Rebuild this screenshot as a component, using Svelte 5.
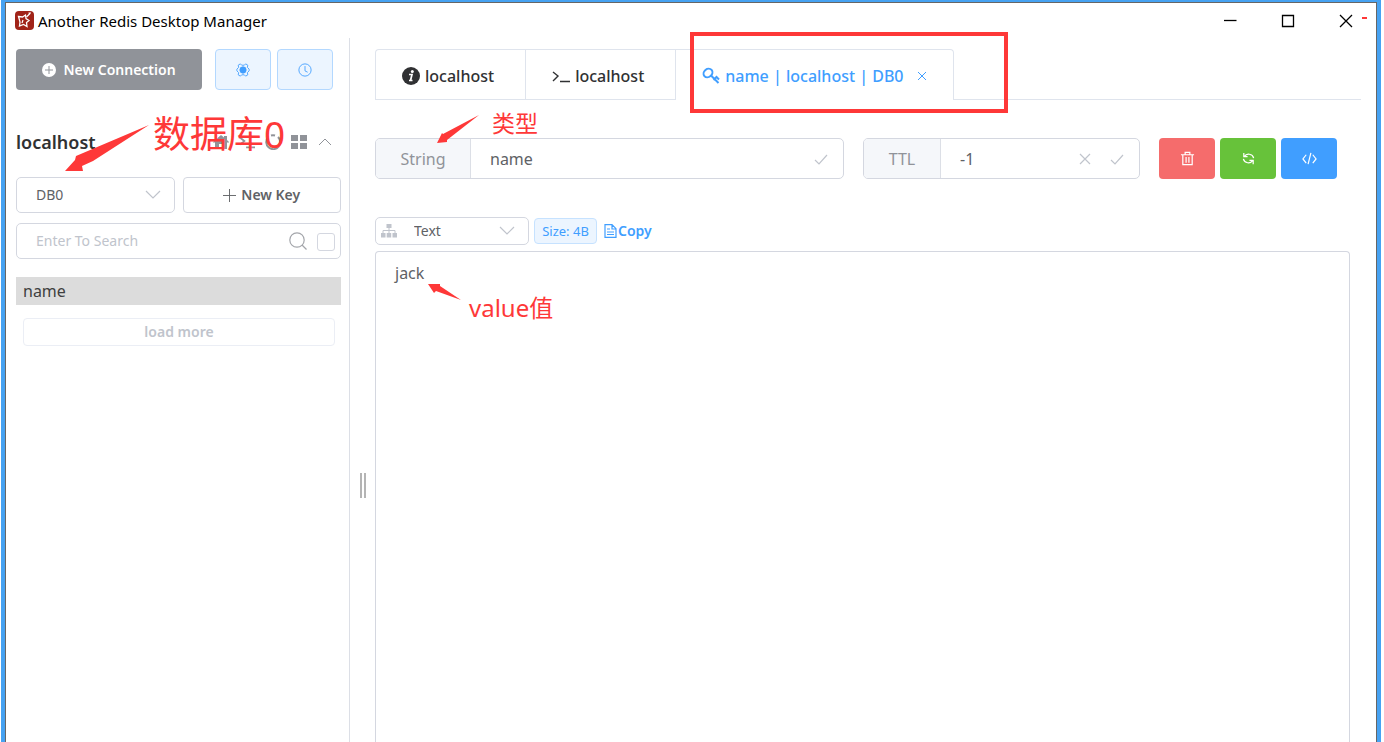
<script lang="ts">
  let db = $state('DB0');
  let format = $state('Text');
  let search = $state('');
  let exact = $state(false);
  let keyName = $state('name');
  let ttl = $state('-1');
  let value = $state('jack');

  const keys = ['name'];
</script>

{#snippet check()}
  <svg class="mark" viewBox="0 0 16 16"><path d="M2 9l4 4 8-9" /></svg>
{/snippet}

{#snippet chevron()}
  <svg class="chevron" viewBox="0 0 16 16"><path d="M1 4l7 7 7-7" /></svg>
{/snippet}

<div class="window">
  <header class="titlebar">
    <svg class="logo" viewBox="0 0 19 19">
      <rect width="19" height="19" rx="4" fill="#a02318" />
      <path d="M3.500 5.500L7.500 6l3-2 .5 3.500 3 2-2.500 2 .5 4-3.500-2-4 1.500.5-4z" stroke="#fff" stroke-width="1.3" />
      <path d="M11.500 6l3.500-3.500M13.500 2h2.500M8 9l-1 3" stroke="#fff" stroke-width="1.2" />
    </svg>
    <h1>Another Redis Desktop Manager</h1>
    <div class="controls">
      <button aria-label="Minimize"><svg viewBox="0 0 14 14"><path d="M1 6.500h12.500" /></svg></button>
      <button aria-label="Maximize"><svg viewBox="0 0 14 14"><path d="M1.500 1.500h11v11h-11z" /></svg></button>
      <button aria-label="Close"><svg viewBox="0 0 14 14"><path d="M1 1l12 12M13 1L1 13" /></svg></button>
    </div>
  </header>

  <div class="body">
    <aside class="sidebar">
      <div class="top-actions">
        <button class="new-connection">
          <svg viewBox="0 0 14 14"><circle cx="7" cy="7" r="7" fill="#fff" /><path d="M3 7h8M7 3v8" stroke="#909399" /></svg>
          New Connection
        </button>
        <button class="plain" aria-label="Settings">
          <svg viewBox="0 0 16 16">
            <path d="M5 1l1.500 1.500h3L11 1l2.500 1.500-.5 2.500L15 7v2l-2 2 .5 2.500L11 15l-1.500-1.500h-3L5 15l-2.500-1.500L3 11 1 9V7l2-2-.5-2.500z" />
            <circle cx="8" cy="8" r="3.600" fill="#409eff" />
          </svg>
        </button>
        <button class="plain" aria-label="Command log">
          <svg viewBox="0 0 16 16"><circle cx="8" cy="8" r="7" /><path d="M8 3.500V9l3 1.500" /></svg>
        </button>
      </div>

      <div class="connection">
        <h2>localhost</h2>
        <div class="tools">
          <button aria-label="Home"><svg class="solid" viewBox="0 0 16 16"><path d="M0 8l8-7 3 2.500V2h3v4l2 2-1 1-1-1v7h-4v-5H6v5H2V8L1 9z" /></svg></button>
          <button aria-label="Console"><svg viewBox="0 0 18 16"><path d="M1 3l5 4-5 4M8 14h10" /></svg></button>
          <button aria-label="Refresh"><svg viewBox="0 0 16 16"><path d="M3 3.500A7 7 0 1 0 13 3M6 1.500A7 7 0 0 1 10 1.500" /></svg></button>
          <button aria-label="Menu"><svg class="solid" viewBox="0 0 16 16"><path d="M0 1h7v6H0zM9 1h7v6H9zM0 9h7v6H0zM9 9h7v6H9z" /></svg></button>
          <button class="thin" aria-label="Collapse"><svg viewBox="0 0 16 16"><path d="M2 11l6-6 6 6" /></svg></button>
        </div>
      </div>

      <div class="row">
        <div class="select">
          <select bind:value={db} aria-label="Database">
            <option>DB0</option>
            <option>DB1</option>
          </select>
          {@render chevron()}
        </div>
        <button class="new-key">
          <svg viewBox="0 0 14 14"><path d="M0 7h14M7 0v14" /></svg>
          New Key
        </button>
      </div>

      <div class="search">
        <input type="text" bind:value={search} placeholder="Enter To Search" aria-label="Search keys" />
        <svg viewBox="0 0 20 20"><circle cx="9" cy="9" r="7.200" /><path d="M14 14l4.500 4.500" /></svg>
        <input type="checkbox" bind:checked={exact} aria-label="Exact search" />
      </div>

      <ul class="keys">
        {#each keys as key}
          <li>{key}</li>
        {/each}
      </ul>
      <button class="load-more" disabled>load more</button>
    </aside>

    <div class="splitter"><span></span></div>

    <main>
      <nav class="tabs">
        <button class="tab">
          <svg viewBox="0 0 18 18">
            <circle cx="9" cy="9" r="9" fill="#303133" />
            <circle cx="10.300" cy="4.500" r="1.500" fill="#fff" />
            <path d="M7 7.500h3l-1.500 6h2M7 13.500h1.500" stroke="#fff" stroke-width="1.700" />
          </svg>
          localhost
        </button>
        <button class="tab">
          <svg class="prompt" viewBox="0 0 18 18"><path d="M1 5l5 4-5 5M8 14.500h10" /></svg>
          localhost
        </button>
        <button class="tab active">
          <svg class="key" viewBox="0 0 18 18">
            <ellipse cx="6" cy="6" rx="4" ry="4.700" transform="rotate(50 6 6)" />
            <path d="M9 8.500l7.500 7.500M12.500 12l2-2 2.500 2.500M12.500 12l-1 1" />
          </svg>
          name | localhost | DB0
          <svg class="close" viewBox="0 0 10 10"><path d="M1 1l8 8M9 1L1 9" /></svg>
        </button>
        <div class="rest"></div>
      </nav>

      <div class="key-header">
        <div class="group key-name">
          <label for="key">String</label>
          <input id="key" type="text" bind:value={keyName} />
          {@render check()}
        </div>
        <div class="group ttl">
          <label for="ttl">TTL</label>
          <input id="ttl" type="text" bind:value={ttl} />
          <svg class="mark" viewBox="0 0 16 16"><path d="M3 3l10 10M13 3L3 13" /></svg>
          {@render check()}
        </div>
        <div class="actions">
          <button class="danger" aria-label="Delete">
            <svg viewBox="0 0 16 16"><path d="M1 4h14M5.500 4V1.500h5V4M3 4v10.500h10V4M6.500 6.500v6M9.500 6.500v6" /></svg>
          </button>
          <button class="success" aria-label="Reload">
            <svg viewBox="0 0 16 16"><path d="M3 2v4h4M3.500 6A5.500 5.500 0 0 1 13.500 7.500M13 14v-4H9M12.500 10A5.500 5.500 0 0 1 2.500 8.500" /></svg>
          </button>
          <button class="primary" aria-label="Dump command">
            <svg viewBox="0 0 16 16"><path d="M4.500 4L1 8.500 4.500 13M11.500 4L15 8.500 11.500 13M9.500 2l-3 12" /></svg>
          </button>
        </div>
      </div>

      <div class="format">
        <div class="select small">
          <svg class="tree" viewBox="0 0 16 14">
            <path d="M5.500 0h5v4h-5zM0 9h4.500v4.500H0zM5.700 9h4.500v4.500H5.700zM11.500 9H16v4.500h-4.500z" />
            <path d="M2 9V6.500h12V9M8 4v5" fill="none" stroke="#c0c4cc" />
          </svg>
          <select bind:value={format} aria-label="Value format">
            <option>Text</option>
            <option>Hex</option>
            <option>Json</option>
          </select>
          {@render chevron()}
        </div>
        <span class="tag">Size: 4B</span>
        <button class="copy">
          <svg viewBox="0 0 13 14"><path d="M1 .7h7l4 4v8.600H1zM8 1v4h4M3 5h3M3 8h7M3 10.500h7" /></svg>Copy
        </button>
      </div>

      <textarea bind:value aria-label="Value"></textarea>
    </main>
  </div>

  <div class="notes">
    <svg width="1384" height="320">
      <rect x="692" y="34" width="314" height="77" stroke="#fe3838" stroke-width="4" />
      <g fill="#fe3838">
        <path d="M149 125L76 156 75 160 65 171 83 171 82 166 93 161z" />
        <path d="M479 115L443 134 442 133 437 143 447 142 447 140z" />
        <path d="M461 300L440 286 440 284 428 284 434 293 436 291z" />
        <path d="M1362 17h5v2h-5z" />
      </g>
    </svg>
    <span class="note database">数据库0</span>
    <span class="note type">类型</span>
    <span class="note value">value值</span>
  </div>
</div>

<style>
  :global(body) {
    background: #fff;
  }
  .window {
    position: relative;
    display: flex;
    flex-direction: column;
    box-sizing: border-box;
    min-height: 100vh;
    margin: 0 3px 0 1px;
    border: solid #46a2f2;
    border-width: 2px 4px 0;
    color: #303133;
    font: 15px/20px 'Noto Sans', 'Noto Sans CJK SC', sans-serif;
    overflow: hidden;
  }
  .window * {
    box-sizing: border-box;
  }
  button,
  input,
  select,
  textarea {
    margin: 0;
    padding: 0;
    border: 0;
    background: none;
    color: inherit;
    font: inherit;
    outline: none;
  }
  svg {
    display: block;
    flex: none;
    fill: none;
  }
  .titlebar {
    display: flex;
    align-items: center;
    height: 36px;
    padding: 0 23px 0 9px;
    border: solid #666;
    border-width: 1px 1px 0;
  }
  .logo {
    width: 19px;
    height: 19px;
    margin-right: 4px;
  }
  h1 {
    margin: 0;
    color: #000;
    font-size: 15px;
    font-weight: 400;
  }
  .controls {
    display: flex;
    gap: 44px;
    margin-left: auto;
  }
  .controls svg {
    width: 14px;
    height: 14px;
    stroke: #000;
    stroke-width: 1.3;
  }
  .body {
    flex: 1;
    display: flex;
    border: solid #666;
    border-width: 0 1px;
  }
  .sidebar {
    width: 344px;
    flex: none;
    padding: 11px 8px 0 10px;
    border-right: 1px solid #dcdfe6;
  }
  .top-actions {
    display: flex;
    gap: 6px;
  }
  .top-actions button {
    display: flex;
    align-items: center;
    justify-content: center;
    height: 41px;
    border-radius: 4px;
  }
  .top-actions .new-connection {
    gap: 7px;
    width: 186px;
    margin-right: 7px;
    background: #909399;
    color: #fff;
    font-size: 14px;
    font-weight: 600;
  }
  .top-actions svg {
    width: 14px;
    height: 14px;
  }
  .plain {
    width: 56px;
    border: 1px solid #b3d8ff;
    background: #ecf5ff;
  }
  .plain svg {
    stroke: #409eff;
  }
  .connection {
    display: flex;
    align-items: center;
    justify-content: space-between;
    height: 87px;
    padding: 16px 8px 0 0;
  }
  h2 {
    margin: 0;
    font-size: 18px;
    font-weight: 600;
  }
  .tools {
    display: flex;
    gap: 10px;
  }
  .tools svg {
    width: 16px;
    height: 16px;
    stroke: #909399;
    stroke-width: 2;
  }
  .tools .solid {
    fill: #909399;
    stroke: none;
  }
  .tools .thin svg {
    stroke-width: 1;
  }
  .row {
    display: flex;
    gap: 8px;
  }
  .row > * {
    flex: 1;
  }
  .select {
    display: flex;
    align-items: center;
    position: relative;
    height: 36px;
    border: 1px solid #d4d7e0;
    border-radius: 5px;
    color: #606266;
  }
  .select select {
    appearance: none;
    width: 100%;
    height: 100%;
    padding-left: 19px;
    font-size: 14px;
  }
  .chevron {
    position: absolute;
    right: 13px;
    width: 16px;
    height: 16px;
    stroke: #c0c4cc;
    stroke-width: 1.2;
    pointer-events: none;
  }
  .new-key {
    display: flex;
    align-items: center;
    justify-content: center;
    gap: 5px;
    border: 1px solid #d4d7e0;
    border-radius: 4px;
    color: #606266;
    font-size: 14px;
    font-weight: 600;
  }
  .new-key svg {
    width: 13px;
    height: 13px;
    stroke: #606266;
  }
  .search {
    display: flex;
    align-items: center;
    height: 36px;
    margin-top: 10px;
    padding: 0 5px 0 19px;
    border: 1px solid #d4d7e0;
    border-radius: 5px;
  }
  .search input[type='text'] {
    flex: 1;
    min-width: 0;
    font-size: 14px;
  }
  .search input::placeholder {
    color: #c0c4cc;
  }
  .search svg {
    width: 20px;
    height: 20px;
    margin-right: 9px;
    stroke: #a4a6ab;
    stroke-width: 1.2;
  }
  .search input[type='checkbox'] {
    appearance: none;
    width: 18px;
    height: 18px;
    margin-top: 2px;
    border: 1px solid #d4d7e0;
    border-radius: 3px;
  }
  .keys {
    margin: 18px 0 13px;
    padding: 0;
    list-style: none;
  }
  .keys li {
    padding: 4px 7px;
    background: #dcdcdc;
    color: #404040;
    font-size: 16px;
  }
  .load-more {
    display: block;
    width: calc(100% - 13px);
    height: 28px;
    margin-left: 7px;
    border: 1px solid #ebeef5;
    border-radius: 4px;
    color: #c0c4cc;
    font-size: 14px;
    font-weight: 600;
  }
  .splitter {
    display: flex;
    align-items: center;
    justify-content: center;
    width: 25px;
    padding-top: 190px;
  }
  .splitter span {
    width: 6px;
    height: 25px;
    border: solid #b4b4b4;
    border-width: 0 2px;
  }
  main {
    flex: 1;
    min-width: 0;
    display: flex;
    flex-direction: column;
    padding: 11px 15px 0 0;
  }
  .tabs {
    display: flex;
    height: 51px;
  }
  .tab {
    display: flex;
    align-items: center;
    gap: 5px;
    padding: 2px 31px 0 26px;
    border: 1px solid #dfe4ed;
    border-right-width: 0;
    font-size: 16px;
    font-weight: 500;
    white-space: nowrap;
  }
  .tab:first-child {
    border-radius: 4px 0 0;
  }
  .tab svg {
    width: 18px;
    height: 18px;
  }
  .tab .prompt {
    stroke: #303133;
    stroke-width: 1.4;
  }
  .active {
    padding-right: 26px;
    border-right-width: 1px;
    border-bottom: 0;
    border-radius: 0 4px 0 0;
    color: #409eff;
  }
  .tab .key {
    stroke: #409eff;
    stroke-width: 2;
  }
  .tab .close {
    width: 10px;
    height: 10px;
    margin-left: 8px;
    stroke: #409eff;
  }
  .rest {
    flex: 1;
    border-bottom: 1px solid #dfe4ed;
  }
  .key-header {
    display: flex;
    gap: 19px;
    margin: 38px 24px 38px 0;
  }
  .group {
    display: flex;
    align-items: center;
    height: 41px;
    padding-right: 14px;
    border: 1px solid #d4d7e0;
    border-radius: 5px;
    color: #606266;
    font-size: 16px;
    overflow: hidden;
  }
  .key-name {
    flex: 1;
  }
  .ttl {
    width: 277px;
  }
  .group label {
    display: grid;
    place-items: center;
    align-self: stretch;
    width: 95px;
    border-right: 1px solid #dcdfe6;
    background: #f5f7fa;
    color: #909399;
  }
  .ttl label {
    width: 77px;
  }
  .group input {
    flex: 1;
    min-width: 0;
    padding-left: 19px;
  }
  .mark {
    width: 16px;
    height: 16px;
    margin-left: 16px;
    stroke: #c0c4cc;
    stroke-width: 1.2;
  }
  .actions {
    display: flex;
    gap: 5px;
  }
  .actions button {
    display: grid;
    place-items: center;
    width: 56px;
    height: 41px;
    border-radius: 4px;
  }
  .actions svg {
    width: 15px;
    height: 15px;
    stroke: #fff;
    stroke-width: 1.3;
  }
  .danger {
    background: #f56c6c;
  }
  .success {
    background: #67c23a;
  }
  .primary {
    background: #409eff;
  }
  .format {
    display: flex;
    align-items: center;
    gap: 5px;
    height: 28px;
    margin-bottom: 6px;
  }
  .small {
    width: 154px;
    height: 28px;
  }
  .small select {
    padding-left: 38px;
  }
  .tree {
    position: absolute;
    left: 5px;
    width: 16px;
    height: 14px;
    fill: #c0c4cc;
  }
  .tag {
    width: 63px;
    height: 26px;
    border: 1px solid #c6e2ff;
    border-radius: 4px;
    background: #ecf5ff;
    color: #409eff;
    font-size: 13px;
    line-height: 25px;
    text-align: center;
    white-space: nowrap;
  }
  .copy {
    display: flex;
    align-items: center;
    gap: 1px;
    margin-left: 2px;
    color: #409eff;
    font-size: 14px;
    font-weight: 600;
  }
  .copy svg {
    width: 13px;
    height: 14px;
    stroke: #409eff;
    stroke-width: 1.2;
  }
  textarea {
    flex: 1;
    margin-right: 11px;
    padding: 11px 19px;
    border: solid #d4d7e0;
    border-width: 1px 1px 0;
    border-radius: 4px 4px 0 0;
    color: #606266;
    font-size: 16px;
    resize: none;
  }
  .notes {
    position: absolute;
    top: -2px;
    left: -5px;
    pointer-events: none;
  }
  .note {
    position: absolute;
    color: #fe3838;
    white-space: nowrap;
  }
  .database {
    top: 114px;
    left: 153px;
    font-size: 37px;
    line-height: 40px;
  }
  .type {
    top: 109px;
    left: 492px;
    font-size: 23px;
    line-height: 28px;
  }
  .value {
    top: 294px;
    left: 469px;
    font-size: 24px;
    line-height: 28px;
  }
</style>
